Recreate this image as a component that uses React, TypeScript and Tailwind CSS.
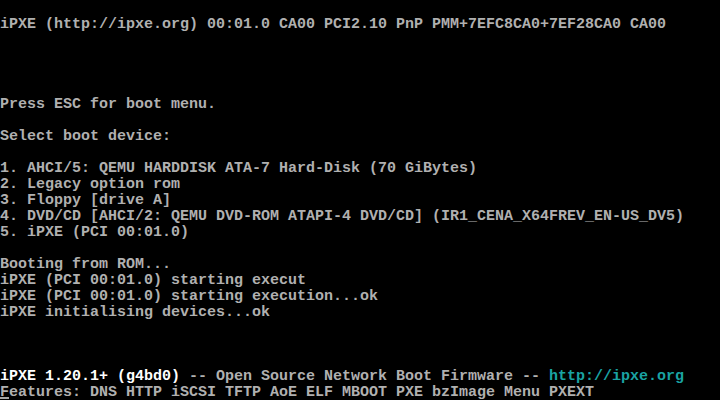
import React from 'react';

// 80x25 text console, 9x16 cells
const rows: (string | React.ReactNode)[] = [
  '',
  'iPXE (http://ipxe.org) 00:01.0 CA00 PCI2.10 PnP PMM+7EFC8CA0+7EF28CA0 CA00',
  '',
  '',
  '',
  '',
  'Press ESC for boot menu.',
  '',
  'Select boot device:',
  '',
  '1. AHCI/5: QEMU HARDDISK ATA-7 Hard-Disk (70 GiBytes)',
  '2. Legacy option rom',
  '3. Floppy [drive A]',
  '4. DVD/CD [AHCI/2: QEMU DVD-ROM ATAPI-4 DVD/CD] (IR1_CENA_X64FREV_EN-US_DV5)',
  '5. iPXE (PCI 00:01.0)',
  '',
  'Booting from ROM...',
  'iPXE (PCI 00:01.0) starting execut',
  'iPXE (PCI 00:01.0) starting execution...ok',
  'iPXE initialising devices...ok',
  '',
  '',
  '',
  <>
    <span className="text-white">iPXE 1.20.1+ (g4bd0)</span>
    {' -- Open Source Network Boot Firmware -- '}
    <span className="text-[#1aa3a3]">http://ipxe.org</span>
  </>,
  <>
    Features: DNS HTTP iSCSI TFTP AoE ELF MBOOT PXE bzImage Menu PXEXT
    {/* blinking text cursor */}
    <span className="absolute left-0 bottom-[1px] w-[9px] h-[2px] bg-[#a8a8a8]" />
  </>,
];

export default function App() {
  return (
    <div className="w-[720px] h-[400px] bg-black overflow-hidden">
      <div className="flex flex-col font-['Liberation_Mono',monospace] font-bold text-[15px] leading-[16px] text-[#b0b0b0] whitespace-pre">
        {rows.map((r, i) => (
          <div key={i} className="relative h-[16px] pt-[1px]">
            {r === '' ? ' ' : r}
          </div>
        ))}
      </div>
    </div>
  );
}
